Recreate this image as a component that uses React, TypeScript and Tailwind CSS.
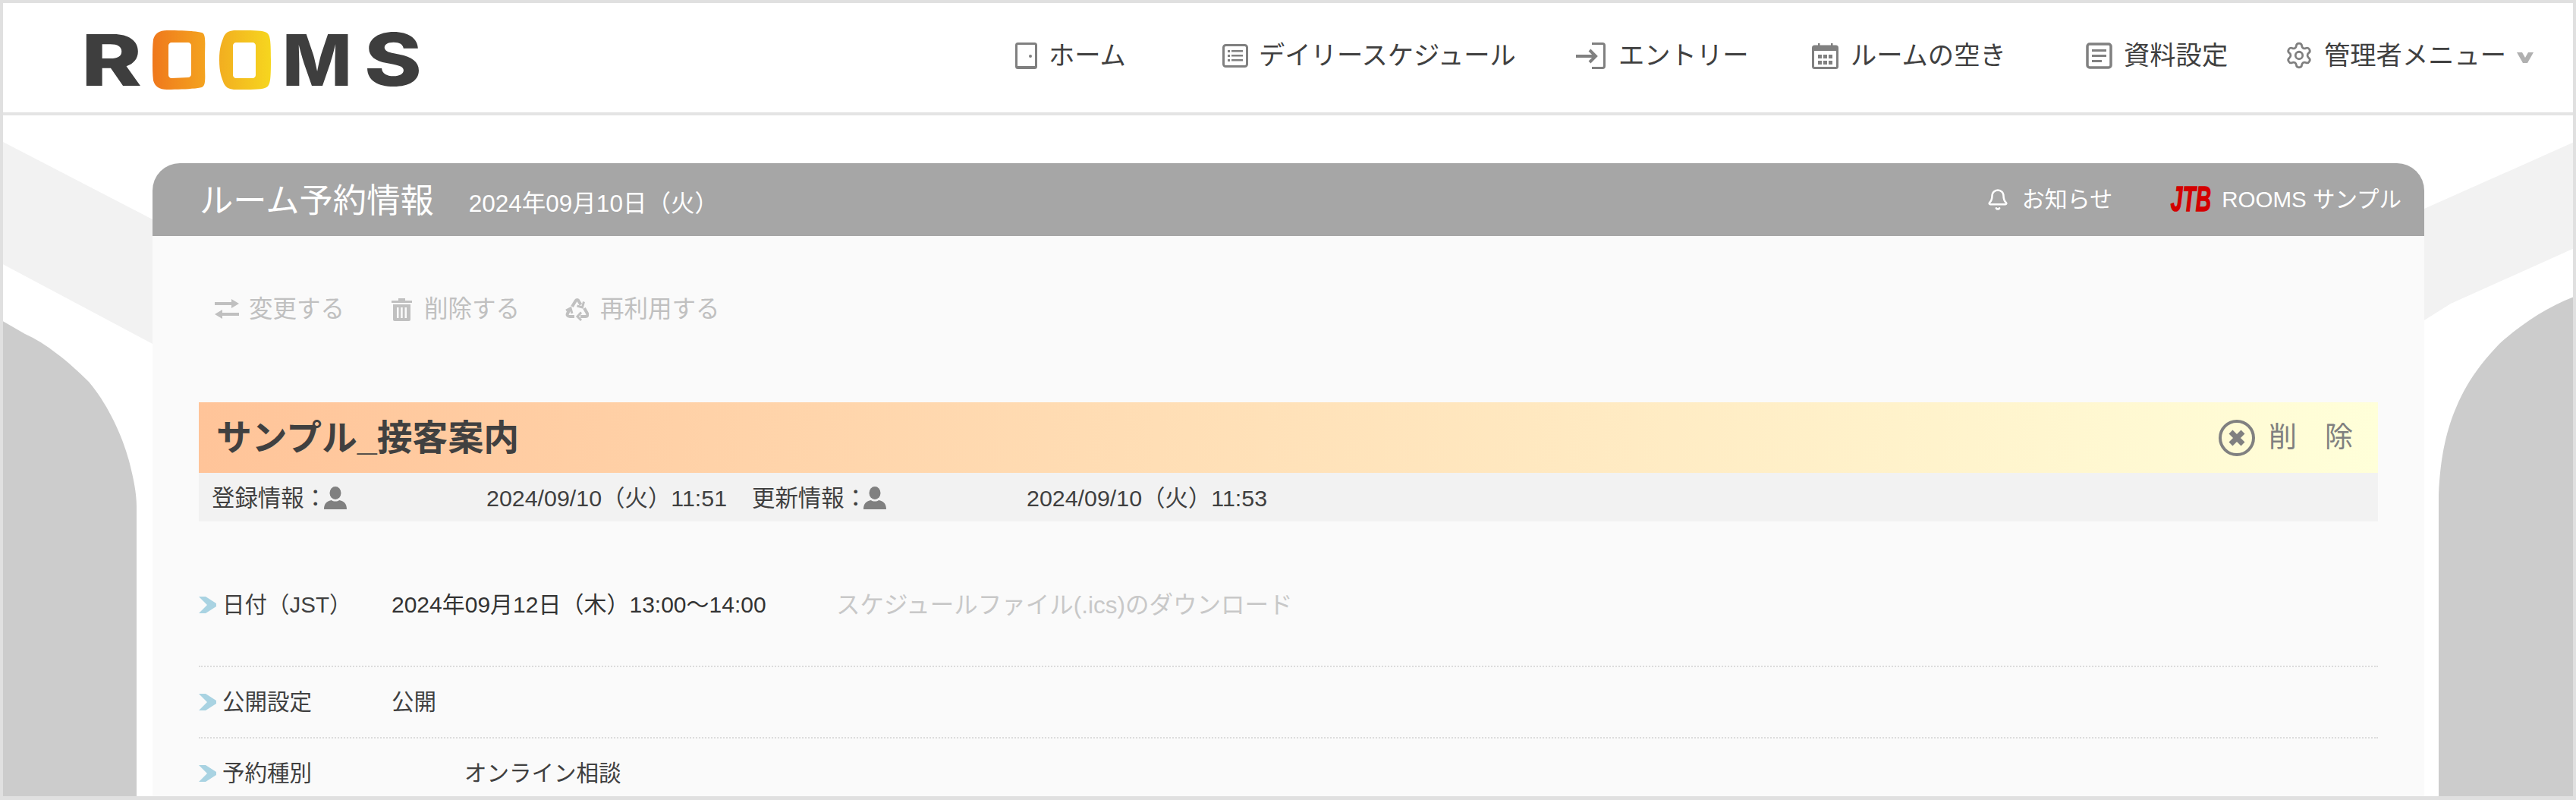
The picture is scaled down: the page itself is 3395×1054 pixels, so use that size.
import { Bell, Settings } from 'lucide-react'

const navItems = [
  { name: 'ホーム', icon: DoorIcon, width: 'w-[273px]', gap: 'gap-[15px]' },
  { name: 'デイリースケジュール', icon: ListIcon, width: 'w-[466px]', gap: 'gap-[14px]' },
  { name: 'エントリー', icon: EntryIcon, width: 'w-[311px]', gap: 'gap-[17px]' },
  { name: 'ルームの空き', icon: CalendarIcon, width: 'w-[361px]', gap: 'gap-[16px]' },
  { name: '資料設定', icon: DocIcon, width: 'w-[262px]', gap: 'gap-[15px]' },
]

function DoorIcon() {
  return (
    <svg width="29" height="35" viewBox="0 0 29 35" className="shrink-0">
      <rect x="1.5" y="1.5" width="26" height="32" rx="2" fill="none" stroke="#808080" strokeWidth="3" />
      <path d="M1 31h27v3H1z" fill="#808080" />
      <circle cx="20" cy="18" r="2" fill="#808080" />
    </svg>
  )
}

function ListIcon() {
  return (
    <svg width="34" height="31" viewBox="0 0 34 31" className="shrink-0">
      <rect x="1.5" y="1.5" width="31" height="28" rx="3" fill="none" stroke="#808080" strokeWidth="3" />
      <rect x="7" y="8" width="3" height="3" fill="#808080" />
      <rect x="7" y="14" width="3" height="3" fill="#808080" />
      <rect x="7" y="20" width="3" height="3" fill="#808080" />
      <rect x="12" y="8" width="15" height="2.5" fill="#808080" />
      <rect x="12" y="14" width="15" height="2.5" fill="#808080" />
      <rect x="12" y="20" width="15" height="2.5" fill="#808080" />
    </svg>
  )
}

function EntryIcon() {
  return (
    <svg width="39" height="35" viewBox="0 0 39 35" fill="none" className="shrink-0">
      <path d="M21 1.5h14a2.5 2.5 0 0 1 2.5 2.5v27a2.5 2.5 0 0 1-2.5 2.5H21" stroke="#808080" strokeWidth="3" />
      <path d="M0 18h25M18 10l8 8-8 8" stroke="#808080" strokeWidth="4" />
    </svg>
  )
}

function CalendarIcon() {
  return (
    <svg width="35" height="35" viewBox="0 0 35 35" className="shrink-0">
      <rect x="1.5" y="5" width="32" height="28.5" rx="2" fill="none" stroke="#808080" strokeWidth="3" />
      <rect x="1.5" y="5" width="32" height="6" fill="#808080" />
      <rect x="8" y="1" width="2.5" height="7" fill="#808080" />
      <rect x="25" y="1" width="2.5" height="7" fill="#808080" />
      {[8, 15, 22].map((x) =>
        [16, 24].map((y) => <rect key={`${x}-${y}`} x={x} y={y} width="5" height="5" fill="#808080" />),
      )}
    </svg>
  )
}

function DocIcon() {
  return (
    <svg width="35" height="35" viewBox="0 0 35 35" className="shrink-0">
      <rect x="2" y="2" width="31" height="31" rx="3" fill="none" stroke="#808080" strokeWidth="3.5" />
      <rect x="8" y="9" width="19" height="3" fill="#808080" />
      <rect x="8" y="16" width="19" height="3" fill="#808080" />
      <rect x="8" y="23" width="13" height="3" fill="#808080" />
    </svg>
  )
}

function PersonIcon() {
  return (
    <svg width="30" height="30" viewBox="0 0 30 30" className="shrink-0">
      <ellipse cx="15" cy="8.5" rx="7.5" ry="8.5" fill="#808080" />
      <path d="M0 30c0-8 4-11 10-12 2 2 8 2 10 0 6 1 10 4 10 12z" fill="#808080" />
    </svg>
  )
}

function SwapIcon() {
  return (
    <svg width="32" height="26" viewBox="0 0 32 26" className="shrink-0">
      <path d="M0 4h22V0l10 6-10 6V8H0zM32 18H10v-4L0 20l10 6v-4h22z" fill="#c0c0c0" />
    </svg>
  )
}

function TrashIcon() {
  return (
    <svg width="27" height="31" viewBox="0 0 27 31" className="shrink-0">
      <path d="M0 4h9V1h9v3h9v3H0z" fill="#c0c0c0" />
      <path d="M2 9h23v20a2 2 0 0 1-2 2H4a2 2 0 0 1-2-2z" fill="#c0c0c0" />
      <rect x="7" y="13" width="2.5" height="14" fill="#fafafa" />
      <rect x="12.2" y="13" width="2.5" height="14" fill="#fafafa" />
      <rect x="17.5" y="13" width="2.5" height="14" fill="#fafafa" />
    </svg>
  )
}

function RecycleIcon() {
  return (
    <svg width="31" height="31" viewBox="0 0 31 31" fill="none" stroke="#c0c0c0" strokeWidth="4" className="shrink-0">
      <path d="M9 12l4.5-7.5c1-2 3-2 4 0l3 5" />
      <path d="M24.5 5.5l-2 7.5-7-2" strokeWidth="3" />
      <path d="M25 14l4 7c1 2 0 4-2 4h-7" />
      <path d="M21 19.5l-5 5.5 5 5" strokeWidth="3" />
      <path d="M12 25H6c-3 0-4-2-3-4l3-6" />
      <path d="M1 17l6-3 2 7" strokeWidth="3" />
    </svg>
  )
}

function RoomsLogo() {
  return (
    <svg width="440" height="78" viewBox="0 0 440 78" className="shrink-0 overflow-visible">
      <defs>
        <linearGradient id="logo-o1" x1="0" x2="1" y1="0" y2="0">
          <stop offset="0" stopColor="#ef781c" />
          <stop offset="1" stopColor="#f4a31f" />
        </linearGradient>
        <linearGradient id="logo-o2" x1="0" x2="1" y1="0" y2="0">
          <stop offset="0" stopColor="#f2ae20" />
          <stop offset="1" stopColor="#f6d61f" />
        </linearGradient>
      </defs>
      <text x="-5" y="73" fontSize="94" fontWeight="800" fill="#3e3e3e" fontFamily="Inter, sans-serif" textLength="80" lengthAdjust="spacingAndGlyphs">R</text>
      <path fillRule="evenodd" fill="url(#logo-o1)" d="M108 0c20 0 38 1 46 3 6 2 4 14 4 36s2 34-4 36c-8 2-26 3-46 3-10 0-16-4-18-12-1-8-1-17-1-27s0-19 1-27c2-8 8-12 18-12zM114 16c-2 0-4 2-4 4v39c0 2 2 4 4 4l22-1c2 0 4-2 4-4V20c0-2-2-4-4-4z" />
      <path fillRule="evenodd" fill="url(#logo-o2)" d="M199 0c20 0 32 0 38 2 7 2 8 8 8 37s-1 35-8 37c-6 2-18 2-38 2-8 0-13-2-16-8-3-8-6-15-6-31s3-23 6-31c3-6 8-8 16-8zM199 16c-2 0-4 2-4 4v39c0 2 2 4 4 4h22c2 0 4-2 4-4V20c0-2-2-4-4-4z" />
      <text x="260" y="73" fontSize="94" fontWeight="800" fill="#3e3e3e" fontFamily="Inter, sans-serif" textLength="92" lengthAdjust="spacingAndGlyphs">M</text>
      <text x="368" y="73" fontSize="96" fontWeight="800" fill="#3e3e3e" fontFamily="Inter, sans-serif" textLength="76" lengthAdjust="spacingAndGlyphs">S</text>
    </svg>
  )
}

function JtbLogo() {
  return (
    <svg width="58" height="36" viewBox="0 0 58 36" className="shrink-0 overflow-visible">
      <text x="1" y="22.5" transform="scale(0.88 1.45)" fontSize="32" fontWeight="700" fontStyle="italic" fill="#d40000" stroke="#d40000" strokeWidth="1" fontFamily="Liberation Sans, sans-serif">JTB</text>
    </svg>
  )
}

function RemoveIcon() {
  return (
    <svg width="48" height="48" viewBox="0 0 48 48" className="shrink-0">
      <ellipse cx="24" cy="24" rx="22" ry="22" fill="none" stroke="#808080" strokeWidth="4" />
      <path d="M16 16l16 16M32 16L16 32" fill="none" stroke="#808080" strokeWidth="7" />
    </svg>
  )
}

function Chevron() {
  return (
    <svg width="23" height="22" viewBox="0 0 23 22" className="shrink-0">
      <path d="M0 0h9l14 9v4L9 22H0l11-11z" fill="#a9d3e2" />
    </svg>
  )
}

function Background() {
  return (
    <svg width="3395" height="1054" viewBox="0 0 3395 1054" className="absolute left-[-4px] top-[-4px]">
      <path d="M0 185L201 289V453L0 346z" fill="#f2f2f2" />
      <path d="M3195 275L3395 186V326L3230 400 3195 422z" fill="#f2f2f2" />
      <path d="M0 421L33 440C60 452 90 476 117 503 140 530 160 570 170 607 176 630 180 650 180 667V1054H0z" fill="#cccccc" />
      <path d="M3395 390C3360 403 3325 425 3294 453 3270 478 3250 505 3237 537 3225 565 3216 600 3214 653V1054H3395z" fill="#cccccc" />
    </svg>
  )
}

function InfoRow({ label, children, className }: { label: string; children: React.ReactNode; className: string }) {
  return (
    <div className={`flex items-center border-b-2 border-dotted border-[#dcdcdc] ${className}`}>
      <Chevron />
      <span className="ml-[8px] w-[223px] shrink-0 text-[29.5px] text-[#404040]">{label}</span>
      {children}
    </div>
  )
}

export default function App() {
  return (
    <div className="relative h-[1054px] w-[3395px] overflow-hidden border-x-4 border-t-4 border-b-[5px] border-[#e0e0e0] bg-white font-['Liberation_Sans','Noto_Sans_CJK_JP',sans-serif] leading-[40px] text-[#333333]">
      <Background />

      {/* Top navigation */}
      <header className="relative flex h-[148px] items-center border-b-4 border-[#e4e4e4] bg-white pl-[108px]">
        <div className="mt-[6px] w-[1226px] shrink-0">
          <RoomsLogo />
        </div>
        <nav className="mb-[6px] flex items-center text-[34.3px] text-[#404040]">
          {navItems.map((item) => {
            const Icon = item.icon
            return (
              <div key={item.name} className={`flex items-center ${item.width} ${item.gap}`}>
                <Icon />
                <span className="whitespace-nowrap">{item.name}</span>
              </div>
            )
          })}
          <div className="flex items-center gap-[14px]">
            <Settings className="h-[38px] w-[38px] shrink-0 text-[#808080]" strokeWidth={1.75} />
            <span className="whitespace-nowrap">管理者メニュー</span>
            <svg width="22" height="14" viewBox="0 0 22 14" className="mt-[6px] shrink-0">
              <path d="M0 0h7l4 7 4-7h7l-8 14H8z" fill="#b0b0b0" />
            </svg>
          </div>
        </nav>
      </header>

      {/* Card */}
      <main className="relative mx-[197px] mt-[63px] w-[2994px]">
        <div className="flex h-[96px] items-center rounded-t-[36px] bg-[#a6a6a6] pl-[62px] pr-[30px] text-white">
          <h1 className="mt-[4px] text-[44.3px]">ルーム予約情報</h1>
          <span className="ml-[46px] mt-[10px] text-[31.5px]">2024年09月10日（火）</span>
          <div className="ml-auto flex items-center gap-[17px]">
            <Bell className="h-[32px] w-[30px]" strokeWidth={2} />
            <span className="text-[30px]">お知らせ</span>
          </div>
          <div className="ml-[76px] flex items-center gap-[10px]">
            <JtbLogo />
            <span className="text-[29.5px]">ROOMS サンプル</span>
          </div>
        </div>

        <div className="bg-[#fafafa] px-[61px]">
          <div className="flex items-center pl-[21px] pt-[76px] text-[31.5px] text-[#c0c0c0]">
            <div className="flex w-[233px] items-center gap-[13px]">
              <SwapIcon />
              <span>変更する</span>
            </div>
            <div className="flex w-[229px] items-center gap-[16px]">
              <TrashIcon />
              <span>削除する</span>
            </div>
            <div className="flex items-center gap-[15px]">
              <RecycleIcon />
              <span>再利用する</span>
            </div>
          </div>

          <div className="mt-[103px] flex h-[93px] items-center justify-between bg-gradient-to-r from-[#ffc499] to-[#ffffd9] pl-[23px] pr-[33px]">
            <h2 className="text-[46.8px] font-bold text-[#404040]">サンプル_接客案内</h2>
            <div className="flex items-center gap-[18px] text-[37px] text-[#808080]">
              <RemoveIcon />
              <span>削　除</span>
            </div>
          </div>

          <div className="flex h-[64px] items-center bg-[#f2f2f2] pl-[17px] pt-[2px] text-[30.4px] text-[#404040]">
            <span className="w-[148px] shrink-0 whitespace-nowrap">登録情報：</span>
            <div className="w-[214px] shrink-0">
              <PersonIcon />
            </div>
            <span className="w-[350px] shrink-0 whitespace-nowrap">2024/09/10（火）11:51</span>
            <span className="w-[147px] shrink-0 whitespace-nowrap">更新情報：</span>
            <div className="w-[215px] shrink-0">
              <PersonIcon />
            </div>
            <span className="whitespace-nowrap">2024/09/10（火）11:53</span>
          </div>

          <InfoRow label="日付（JST）" className="pb-[60px] pt-[90px]">
            <span className="w-[586px] shrink-0 text-[30px]">2024年09月12日（木）13:00〜14:00</span>
            <span className="text-[31.5px] text-[#c8c8c8]">スケジュールファイル(.ics)のダウンロード</span>
          </InfoRow>
          <InfoRow label="公開設定" className="h-[94px]">
            <span className="text-[29.5px] text-[#404040]">公開</span>
          </InfoRow>
          <InfoRow label="予約種別" className="h-[94px]">
            <span className="ml-[96px] text-[29.5px] text-[#404040]">オンライン相談</span>
          </InfoRow>
        </div>
      </main>
    </div>
  )
}
